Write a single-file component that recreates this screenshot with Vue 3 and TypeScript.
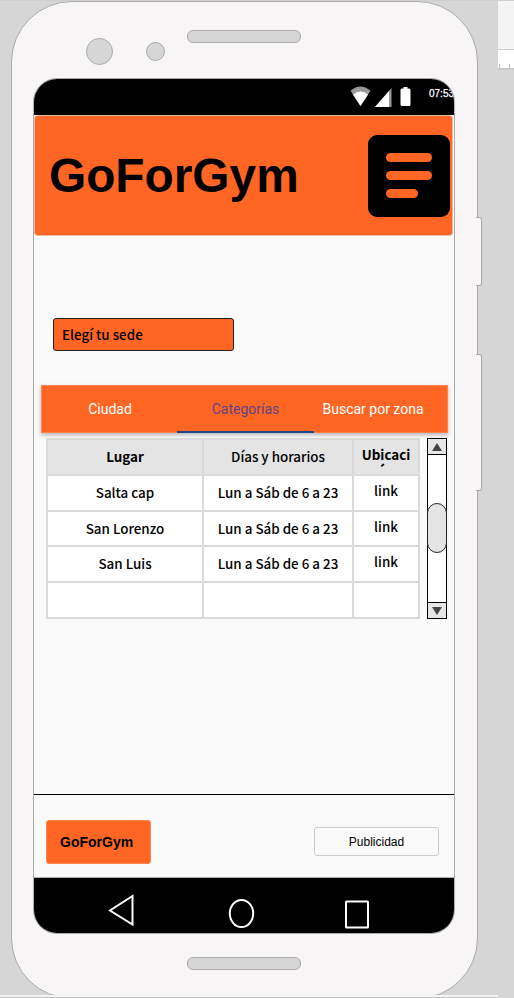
<script setup lang="ts">
interface Venue {
  place: string
  hours: string
  link: string
}

const venues: Venue[] = [
  { place: 'Salta cap', hours: 'Lun a Sáb de 6 a 23', link: 'link' },
  { place: 'San Lorenzo', hours: 'Lun a Sáb de 6 a 23', link: 'link' },
  { place: 'San Luis', hours: 'Lun a Sáb de 6 a 23', link: 'link' },
  { place: '', hours: '', link: '' },
]

const tabs: string[] = ['Ciudad', 'Categorías', 'Buscar por zona']
const activeTab = 'Categorías'
</script>

<template>
  <div class="canvas">
    <div class="ruler"><i></i><i></i></div>
    <div class="side-key power"></div>
    <div class="side-key volume"></div>
    <div class="phone">
      <div class="top-hardware">
        <span class="camera"></span>
        <span class="sensor"></span>
        <span class="speaker"></span>
      </div>

      <div class="screen">
        <div class="status">
          <svg class="status-icons" width="64" height="24" viewBox="0 0 64 24">
            <path d="M0.500 4.800Q10.500 -4 20.500 4.800L10.500 20Z" fill="#999" />
            <path d="M3 8.600Q10.500 2.600 18 8.600L10.500 20Z" fill="#fff" />
            <path d="M41.500 2V21H25Z" fill="#999" />
            <path d="M39 5V21H25Z" fill="#fff" />
            <path d="M53.500 1h4v1.500h1.500q1.500 0 1.500 1.500v14.500q0 1.500-1.500 1.500h-7q-1.500 0-1.500-1.500v-14.500q0-1.500 1.500-1.500h1.500z" fill="#fff" />
          </svg>
          <span class="clock">07:53</span>
        </div>

        <header class="header">
          <h1>GoForGym</h1>
          <button class="menu" aria-label="Menu">
            <span></span><span></span><span class="short"></span>
          </button>
        </header>

        <main class="content">
          <div class="select">Elegí tu sede</div>

          <nav class="tabs">
            <div v-for="tab in tabs" :key="tab" class="tab" :class="{ active: tab === activeTab }">{{ tab }}</div>
          </nav>

          <div class="listing">
            <div class="table">
              <div class="cell head bold">Lugar</div>
              <div class="cell head">Días y horarios</div>
              <div class="cell head bold place-head"><span>Ubicación</span></div>
              <template v-for="(venue, index) in venues" :key="index">
                <div class="cell">{{ venue.place }}</div>
                <div class="cell">{{ venue.hours }}</div>
                <div class="cell raised">{{ venue.link }}</div>
              </template>
            </div>
            <div class="scrollbar">
              <div class="arrow">
                <svg width="10" height="8" viewBox="0 0 10 8"><path d="M5 0L10 8H0Z" fill="#444" /></svg>
              </div>
              <div class="track"><div class="thumb"></div></div>
              <div class="arrow down">
                <svg width="10" height="8" viewBox="0 0 10 8"><path d="M5 8L10 0H0Z" fill="#444" /></svg>
              </div>
            </div>
          </div>
        </main>

        <footer class="footer">
          <div class="brand">GoForGym</div>
          <div class="ad">Publicidad</div>
        </footer>

        <div class="android-nav">
          <svg width="420" height="54" viewBox="0 0 420 54" fill="none" stroke="#fff" stroke-width="2">
            <path d="M98.500 18L76 32.500L98.500 46.500Z" />
            <ellipse cx="207.500" cy="35.500" rx="11.700" ry="13.500" />
            <rect x="312" y="23.500" width="22" height="26" rx="0.500" />
          </svg>
        </div>
      </div>

      <div class="bottom-hardware"><span class="speaker"></span></div>
    </div>
    <div class="canvas-edge"></div>
  </div>
</template>

<style>
body {
  background: #d6d6d6;
}
</style>

<style scoped>
* {
  box-sizing: border-box;
}

.canvas {
  position: relative;
  width: 514px;
  height: 998px;
  overflow: hidden;
  padding: 1px 0 0 11px;
  background: #d6d6d6;
  border-top: 1px solid #cfcfcf;
  font-family: "Noto Sans CJK SC", "Noto Sans", sans-serif;
  color: #000;
}

.ruler {
  position: absolute;
  right: 0;
  top: -1px;
  width: 16px;
  height: 70px;
  padding: 14px 0 0 1px;
  display: flex;
  align-items: flex-end;
  gap: 9px;
  background: linear-gradient(#f4f4f4 0 49px, #ccc 49px 50px, #fff 50px 68px, #cacaca 68px 70px);
}

.ruler i {
  width: 1px;
  height: 4px;
  margin-bottom: 2px;
  background: #bbb;
}

.side-key {
  position: absolute;
  left: 470px;
  width: 12px;
  background: #f7f5f6;
  border: 1px solid #aaa;
  border-radius: 0 3px 3px 0;
  z-index: 2;
  border-left: 0;
}

.power {
  top: 216px;
  height: 69px;
}

.volume {
  top: 353px;
  height: 137px;
}

.side-key::before {
  content: "";
  position: absolute;
  left: 0;
  top: -2px;
  bottom: -2px;
  width: 6px;
  background: #f7f5f6;
}

.phone {
  width: 467px;
  height: 998px;
  margin-top: -1px;
  background: #f7f5f6;
  border: 1px solid #aaa;
  border-radius: 61px;
  display: flex;
  flex-direction: column;
  align-items: center;
}

.top-hardware {
  align-self: stretch;
  height: 76px;
  flex: none;
  display: flex;
  padding: 28px 0 0 74px;
}

.camera,
.sensor,
.speaker {
  display: block;
  background: #d6d6d6;
  border: 1px solid #aaa;
}

.camera {
  width: 27px;
  height: 27px;
  border-radius: 50%;
  margin-top: 8px;
}

.sensor {
  width: 19px;
  height: 19px;
  border-radius: 50%;
  margin: 12px 0 0 33px;
}

.speaker {
  width: 114px;
  height: 13px;
  border-radius: 6px;
}

.top-hardware .speaker {
  margin-left: 22px;
}

.screen {
  width: 422px;
  height: 856px;
  margin-right: 1px;
  flex: none;
  border: 1px solid #aaa;
  border-radius: 24px;
  overflow: hidden;
  background: #fafafa;
  display: flex;
  flex-direction: column;
}

.status {
  height: 36px;
  flex: none;
  background: #000;
  display: flex;
  justify-content: flex-end;
}

.status-icons {
  margin: 7px 15px 0 0;
}

.clock {
  width: 25px;
  margin-top: 9px;
  font: 10px/12px "Liberation Sans", Arial, sans-serif;
  -webkit-text-stroke: 0.25px #fff;
  color: #fff;
  white-space: nowrap;
}

.header {
  height: 119px;
  flex: none;
  margin: 1px 2px 0 1px;
  padding: 0 2px 0 14px;
  border-radius: 3px;
  background: #ff6624;
  box-shadow: 0 0 0 1px #e8b7a0;
  display: flex;
  align-items: center;
  justify-content: space-between;
}

h1 {
  margin: 1px 0 0;
  font: bold 47.8px/56px "Liberation Sans", Arial, sans-serif;
}

.menu {
  width: 82px;
  height: 82px;
  padding: 18px;
  border: 0;
  border-radius: 9px;
  background: #000;
  display: flex;
  flex-direction: column;
  gap: 9px;
}

.menu span {
  width: 46px;
  height: 9px;
  border-radius: 5px;
  background: #ff6624;
}

.menu .short {
  width: 32px;
}

.content {
  height: 559px;
  flex: none;
  padding: 83px 7px 0;
}

.select {
  width: 181px;
  height: 33px;
  margin-left: 12px;
  padding-left: 8px;
  border: 1px solid #222;
  border-radius: 3px;
  background: #ff6624;
  font-size: 13.4px;
  line-height: 31px;
  font-weight: 500;
}

.tabs {
  height: 48px;
  margin-top: 34px;
  display: grid;
  grid-template-columns: 136px 137px 1fr;
  width: 407px;
  background: #ff6624;
  box-shadow: inset 0 0 0 1px #ff834e, 0 2px 4px rgba(0, 0, 0, 0.28);
  font: 14px/48px Roboto, sans-serif;
  color: #fff;
  text-align: center;
}

.tab:first-child {
  padding-left: 2px;
}

.tab:last-child {
  padding-right: 16px;
}

.active {
  color: #5a4583;
  box-shadow: inset 0 -2px #214489;
}

.listing {
  display: flex;
  justify-content: space-between;
  margin: 5px 0 0 5px;
}

.table {
  display: grid;
  grid-template-columns: 154px 148px 64px;
  grid-template-rows: 34px 34px 33px 34px 34px;
  gap: 2px;
  padding: 2px;
  background: #dadada;
}

.cell {
  display: flex;
  align-items: center;
  justify-content: center;
  padding-bottom: 2px;
  background: #fff;
  font-size: 13.4px;
  line-height: 20px;
  font-weight: 500;
  overflow: hidden;
}

.head {
  background: #e4e4e4;
}

.bold {
  font-weight: 700;
}

.raised {
  padding-bottom: 6px;
}

.place-head {
  align-items: flex-start;
}

.place-head span {
  width: 50px;
  height: 27px;
  padding-top: 7px;
  overflow: hidden;
  word-break: break-all;
  text-align: center;
  line-height: 15.5px;
}

.scrollbar {
  width: 20px;
  height: 181px;
  border: 1px solid #000;
  background: #fff;
  display: flex;
  flex-direction: column;
}

.arrow {
  height: 16px;
  flex: none;
  display: flex;
  align-items: center;
  justify-content: center;
  background: #e6e6e6;
  border-bottom: 1px solid #000;
}

.down {
  border-bottom: 0;
  border-top: 1px solid #000;
}

.track {
  flex: 1;
  padding-top: 48px;
}

.thumb {
  width: 20px;
  height: 50px;
  margin-left: -1px;
  border: 1px solid #222;
  border-radius: 10px;
  background: #e4e4e4;
}

.footer {
  height: 84px;
  flex: none;
  border-top: 1px solid #000;
  border-bottom: 1px solid #aaa;
  display: flex;
  align-items: center;
  justify-content: space-between;
  padding: 11px 15px 0 12px;
  font-family: "Liberation Sans", Arial, sans-serif;
}

.brand {
  width: 105px;
  height: 44px;
  border-radius: 3px;
  background: #ff6624;
  border: 1px solid #ff854f;
  font-weight: 700;
  font-size: 14px;
  line-height: 43px;
  padding-left: 13px;
}

.ad {
  width: 125px;
  height: 29px;
  border: 1px solid #ccc;
  border-radius: 3px;
  font-size: 12px;
  line-height: 28px;
  text-align: center;
}

.android-nav {
  flex: 1;
  background: #000;
}

.bottom-hardware {
  padding: 23px 1px 0 0;
}

.canvas-edge {
  position: absolute;
  left: 0;
  bottom: 0;
  width: 498px;
  height: 3px;
  background: #f3f3f3;
  border-bottom: 1px solid #c4c4c4;
}
</style>
